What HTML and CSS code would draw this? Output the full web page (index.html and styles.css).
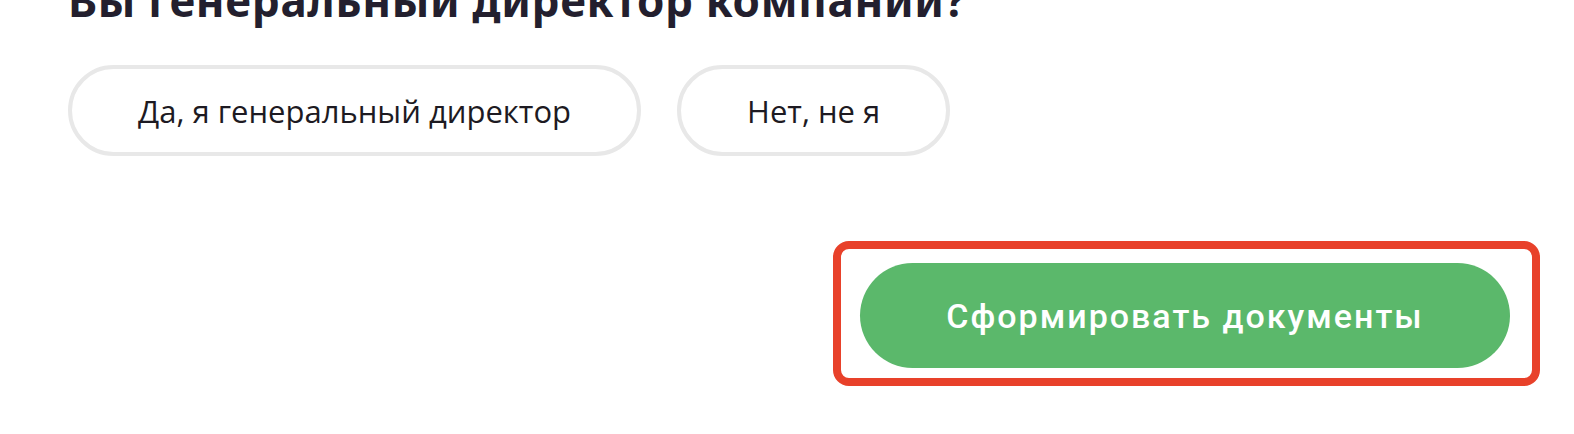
FILE: index.html
```html
<!DOCTYPE html>
<html lang="ru">
<head>
<meta charset="utf-8">
<link rel="stylesheet" href="styles.css">
</head>
<body>
<div class="page">
  <h2 class="question">Вы генеральный директор компании?</h2>
  <div class="options">
    <button class="option">Да, я генеральный директор</button>
    <button class="option">Нет, не я</button>
  </div>
  <div class="actions">
    <div class="highlight">
      <button class="submit">Сформировать документы</button>
    </div>
  </div>
</div>
</body>
</html>
```
FILE: styles.css
```css
html, body {
  margin: 0;
  padding: 0;
  background: #ffffff;
}
.page {
  padding: 0 34px 0 68px;
  margin-top: -28px;
}
.question {
  margin: 0;
  font-family: "Noto Sans", sans-serif;
  font-weight: 700;
  font-size: 44px;
  line-height: 56px;
  letter-spacing: 0.7px;
  color: #231f2e;
}
.options {
  display: flex;
  gap: 36px;
  margin-top: 37px;
}
.option {
  height: 91px;
  padding: 0 66px;
  border: 4px solid #e8e8e8;
  border-radius: 46px;
  background: #fff;
  font-family: "Open Sans", sans-serif;
  font-size: 31px;
  color: #1d1a22;
  cursor: pointer;
}
.actions {
  display: flex;
  justify-content: flex-end;
  margin-top: 85px;
}
.highlight {
  border: 8px solid #e8412a;
  border-radius: 16px;
  padding: 14px 22px 10px 19px;
}
.submit {
  display: block;
  width: 650px;
  height: 105px;
  border: none;
  border-radius: 53px;
  background: #5bb86b;
  color: #fff;
  font-family: Roboto, sans-serif;
  font-weight: 500;
  font-size: 34px;
  letter-spacing: 2px;
  cursor: pointer;
}
```
